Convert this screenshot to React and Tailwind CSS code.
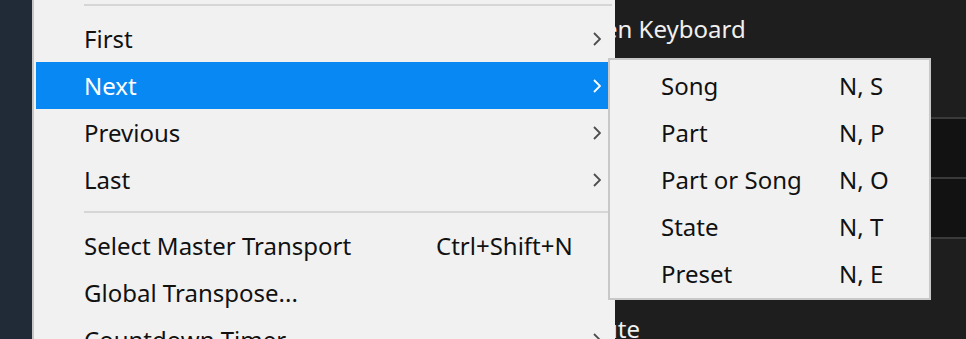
import React from "react";

const Chevron = ({ active }) => (
  <svg width="8" height="14" viewBox="0 0 8 14" className="shrink-0">
    <polyline
      points="1,1 7,7 1,13"
      fill="none"
      stroke={active ? "#ffffff" : "#4d4d4d"}
      strokeWidth="1.8"
    />
  </svg>
);

export default function App() {
  const top = [
    { label: "First", sub: true },
    { label: "Next", sub: true, active: true },
    { label: "Previous", sub: true },
    { label: "Last", sub: true },
  ];
  const bottom = [
    { label: "Select Master Transport", shortcut: "Ctrl+Shift+N" },
    { label: "Global Transpose..." },
    { label: "Countdown Timer", sub: true },
  ];
  const next = [
    { label: "Song", shortcut: "N, S" },
    { label: "Part", shortcut: "N, P" },
    { label: "Part or Song", shortcut: "N, O" },
    { label: "State", shortcut: "N, T" },
    { label: "Preset", shortcut: "N, E" },
  ];

  const Row = ({ item }) => (
    <div
      className={`mx-[2px] flex h-[47px] items-center pl-[48px] pr-[12px] ${
        item.active ? "bg-[#0788f2] text-white" : "text-[#111]"
      }`}
    >
      <span className="w-[352px] whitespace-nowrap">{item.label}</span>
      <span className="flex-1 whitespace-nowrap">{item.shortcut}</span>
      {item.sub && <Chevron active={item.active} />}
    </div>
  );

  return (
    <div
      className="relative flex h-[339px] w-[966px] overflow-hidden text-[24px] leading-[47px]"
      style={{ fontFamily: '"Noto Sans", "Open Sans", sans-serif' }}
    >
      {/* Background */}
      <div className="w-[32px] shrink-0 bg-[#212a37]" />
      <div className="w-[583px] shrink-0 bg-[#f1f1f1]" />
      <div className="flex flex-1 flex-col overflow-hidden bg-[#1e1e1e] text-[#f0f0f0]">
        <div className="mt-[5px] h-[47px] shrink-0 -ml-[11px] whitespace-nowrap">en Keyboard</div>
        <div className="mt-[65px] h-[2px] shrink-0 bg-[#3a3a3a]" />
        <div className="h-[58px] shrink-0 bg-[#121212]" />
        <div className="h-[2px] shrink-0 bg-[#3a3a3a]" />
        <div className="h-[58px] shrink-0 bg-[#121212]" />
        <div className="h-[2px] shrink-0 bg-[#3a3a3a]" />
        <div className="mt-[66px] h-[47px] shrink-0 -ml-[12px] whitespace-nowrap">ute</div>
      </div>

      {/* Main menu */}
      <div className="absolute left-[32px] top-0 w-[583px] border-l-2 border-[#c6c6c6] bg-[#f1f1f1]">
        <div className="h-[15px] pt-[4px]">
          <div className="ml-[50px] mr-[3px] h-[2px] bg-[#d6d6d6]" />
        </div>
        {top.map((item) => (
          <Row key={item.label} item={item} />
        ))}
        <div className="h-[19px] pt-[8px]">
          <div className="ml-[50px] mr-[3px] h-[2px] bg-[#d6d6d6]" />
        </div>
        {bottom.map((item) => (
          <Row key={item.label} item={item} />
        ))}
      </div>

      {/* Submenu */}
      <div className="absolute left-[608px] top-[58px] w-[323px] border-2 border-[#c8c8c8] bg-[#f1f1f1] pb-[1px] pt-[2px] text-[#111]">
        {next.map((item) => (
          <div key={item.label} className="flex h-[47px] items-center pl-[51px]">
            <span className="w-[178px] whitespace-nowrap">{item.label}</span>
            <span className="whitespace-nowrap">{item.shortcut}</span>
          </div>
        ))}
      </div>
    </div>
  );
}
